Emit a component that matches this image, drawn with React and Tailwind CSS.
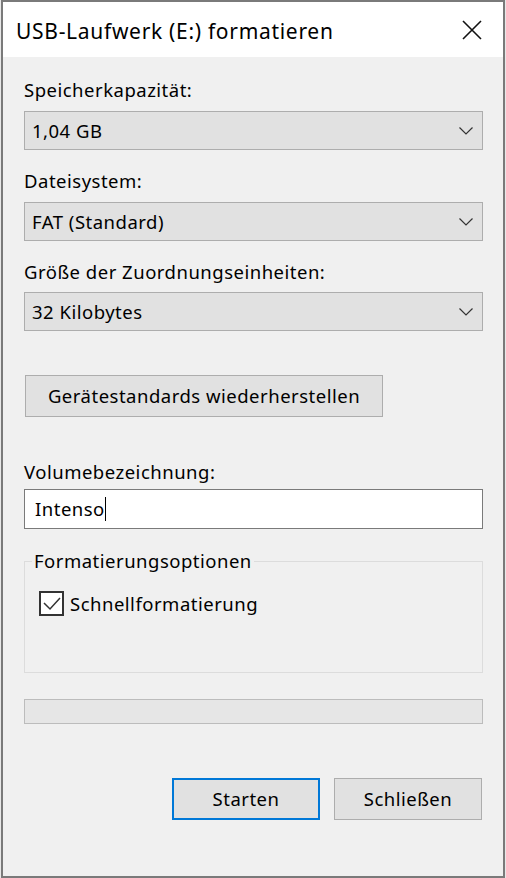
import React from 'react';

const font = { fontFamily: '"Noto Sans", "Open Sans", sans-serif' };

function Chevron() {
  return (
    <svg width="14" height="8" viewBox="0 0 14 8" className="shrink-0">
      <path d="M0.5 0.5 L7 7 L13.5 0.5" fill="none" stroke="#333" strokeWidth="1.2" />
    </svg>
  );
}

function Dropdown({ value }) {
  return (
    <div className="h-[39px] border border-[#adadad] bg-[#e1e1e1] flex items-center pl-[7px] pr-[9px]">
      <span className="flex-1 leading-[24px]">{value}</span>
      <Chevron />
    </div>
  );
}

function Label({ children, className = '' }) {
  return <div className={`leading-[24px] h-[24px] ${className}`}>{children}</div>;
}

export default function App() {
  return (
    <div className="w-[506px] h-[878px] bg-[#e8e8e8] text-[18.5px] tracking-[0.5px] text-[#000]" style={font}>
      <div className="ml-[1px] w-[504px] h-[878px] border-2 border-[#7a7a7a] bg-[#f0f0f0] flex flex-col">
        {/* Title bar */}
        <div className="h-[55px] bg-white flex items-center pl-[13px] pr-[21px] shrink-0">
          <span className="flex-1 text-[21px] tracking-[0.7px] leading-[28px] pt-[2px]">USB-Laufwerk (E:) formatieren</span>
          <svg width="20" height="20" viewBox="0 0 20 20">
            <path d="M1 1 L19 19 M19 1 L1 19" stroke="#111" strokeWidth="1.6" />
          </svg>
        </div>

        {/* Body */}
        <div className="flex flex-col pl-[21px] pr-[20px] pt-[21px]">
          <Label>Speicherkapazität:</Label>
          <div className="mt-[9px]"><Dropdown value="1,04 GB" /></div>

          <Label className="mt-[19px]">Dateisystem:</Label>
          <div className="mt-[9px]"><Dropdown value="FAT (Standard)" /></div>

          <Label className="mt-[19px]">Größe der Zuordnungseinheiten:</Label>
          <div className="mt-[8px]"><Dropdown value="32 Kilobytes" /></div>

          <div className="mt-[44px] pl-[1px]">
            <button className="w-[358px] h-[42px] border border-[#adadad] bg-[#e1e1e1] leading-[24px]">
              Gerätestandards wiederherstellen
            </button>
          </div>

          <Label className="mt-[43px]">Volumebezeichnung:</Label>
          <div className="mt-[5px] h-[40px] border border-[#7a7a7a] bg-white flex items-center pl-[10px]">
            <span className="leading-[24px]">Intenso</span>
            <span className="w-[1px] h-[24px] bg-black" />
          </div>

          <div className="relative mt-[32px] h-[112px] border border-[#dcdcdc]">
            <span className="absolute -top-[13px] left-[7px] px-[2px] bg-[#f0f0f0] leading-[24px]">
              Formatierungsoptionen
            </span>
            <div className="flex items-center mt-[29px] ml-[14px] gap-[6px]">
              <div className="w-[25px] h-[25px] border-2 border-[#333] bg-white flex items-center justify-center">
                <svg width="21" height="21" viewBox="0 0 21 21">
                  <path d="M3 10 L9 16 L19 5" fill="none" stroke="#333" strokeWidth="1.5" />
                </svg>
              </div>
              <span className="leading-[24px]">Schnellformatierung</span>
            </div>
          </div>

          <div className="mt-[26px] h-[25px] border border-[#bcbcbc] bg-[#e6e6e6]" />

          <div className="mt-[54px] flex justify-end gap-[14px] pr-[1px]">
            <button className="w-[148px] h-[42px] border-2 border-[#0078d7] bg-[#e1e1e1] leading-[24px]">
              Starten
            </button>
            <button className="w-[148px] h-[42px] border border-[#adadad] bg-[#e1e1e1] leading-[24px]">
              Schließen
            </button>
          </div>
        </div>
      </div>
    </div>
  );
}
